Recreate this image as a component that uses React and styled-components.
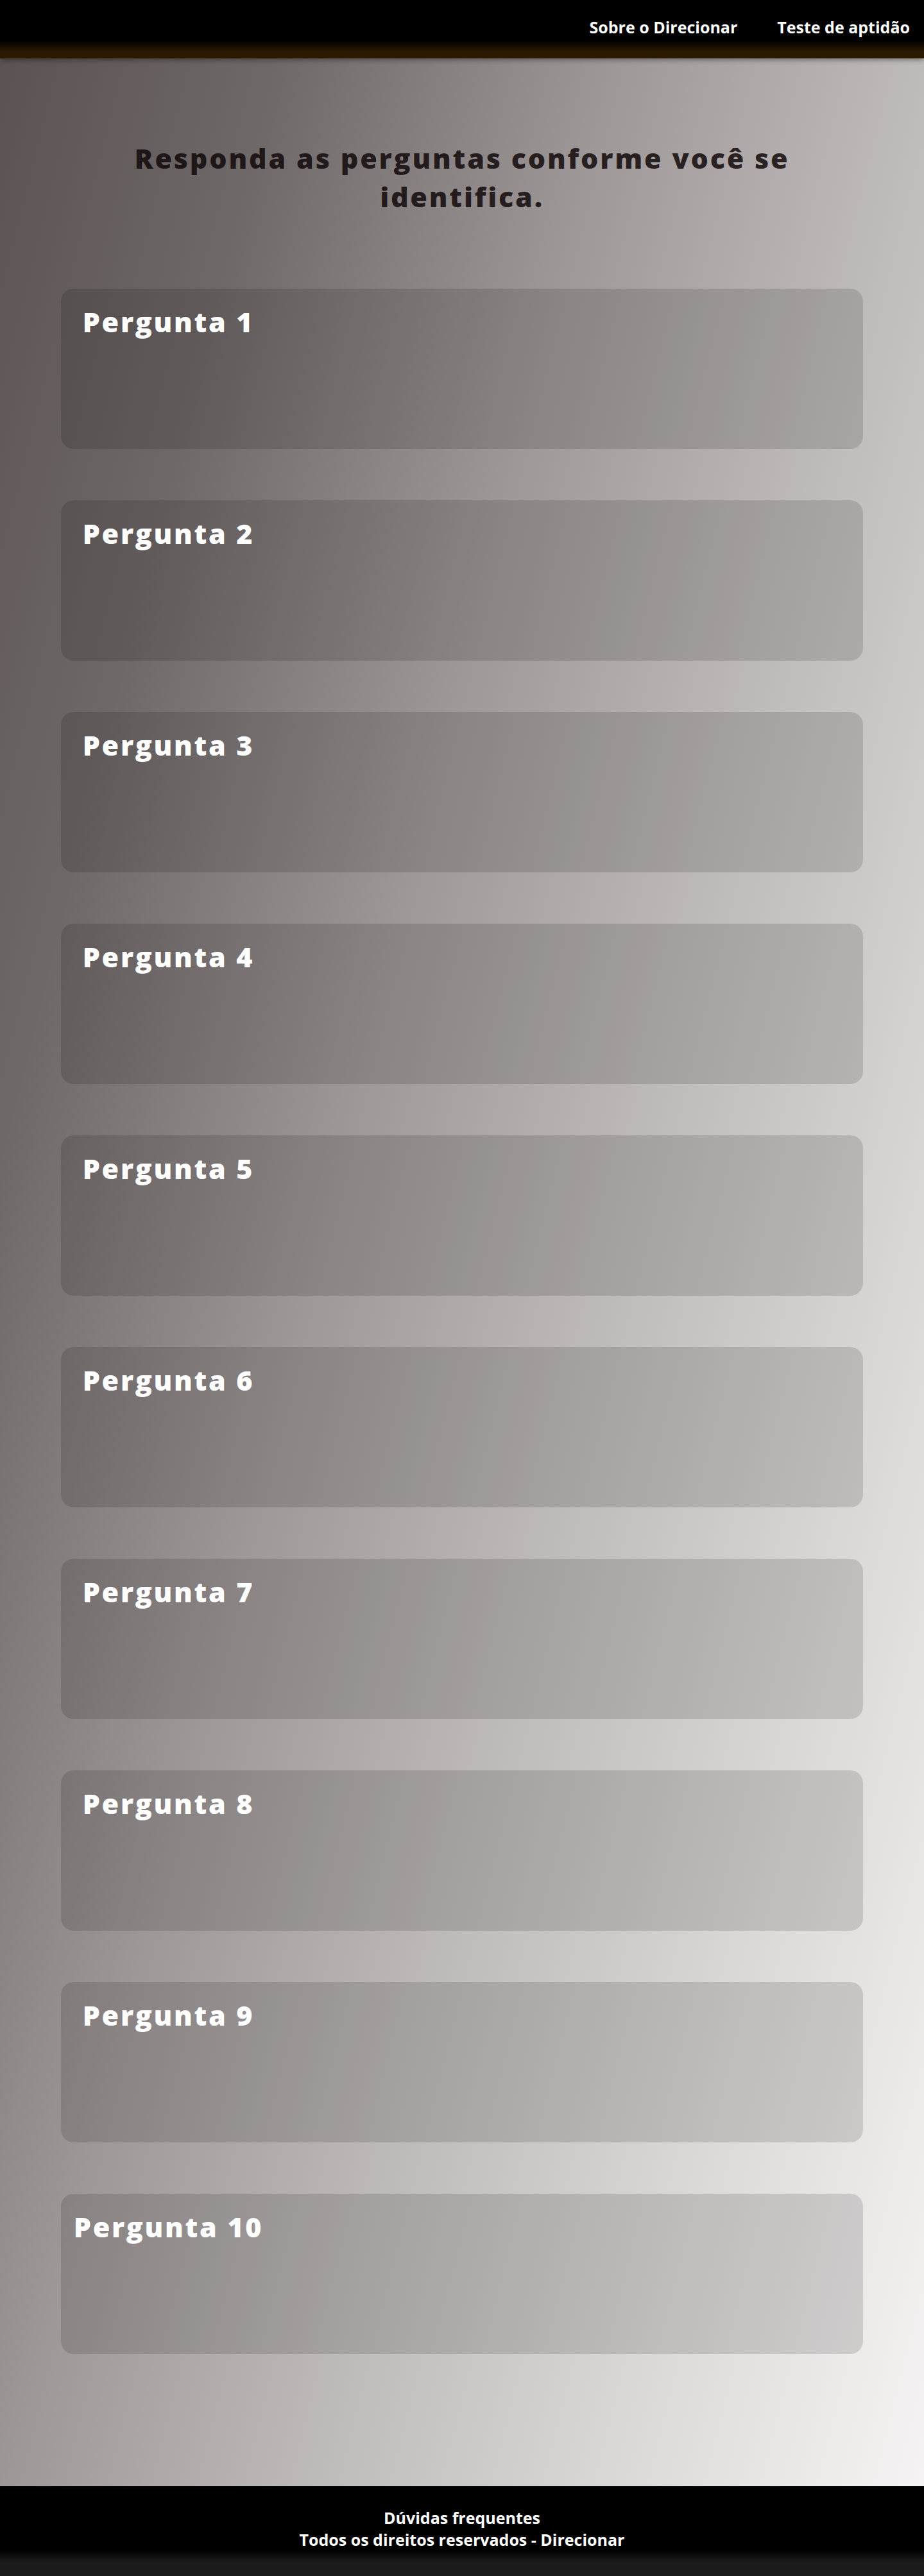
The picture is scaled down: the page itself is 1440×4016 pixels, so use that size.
import React from "react";
import styled, { createGlobalStyle } from "styled-components";

const GlobalStyle = createGlobalStyle`
  * {
    box-sizing: border-box;
  }
  body {
    margin: 0;
    font-family: "Open Sans", "Noto Sans", sans-serif;
    background: #000;
  }
`;

const Page = styled.div`
  display: flex;
  flex-direction: column;
  min-height: 4016px;
`;

const Header = styled.header`
  position: relative;
  z-index: 2;
  height: 91px;
  display: flex;
  justify-content: flex-end;
  align-items: flex-start;
  padding: 25px 22px 0 0;
  background: linear-gradient(to bottom, #000 0%, #000 70%, #291900 88%, #2a1a00 100%);
  box-shadow: 0 3px 7px rgba(0, 0, 0, 0.35);
`;

const Nav = styled.nav`
  display: flex;
  gap: 62px;
`;

const NavLink = styled.a`
  color: #fff;
  font-size: 25px;
  font-weight: 700;
  text-decoration: none;
  cursor: pointer;
`;

const Main = styled.main`
  flex: 1;
  display: flex;
  flex-direction: column;
  align-items: center;
  padding: 126px 95px 206px;
  background: linear-gradient(104deg, #5a5253 0%, #6f6868 18%, #9e9798 40%, #bfbaba 60%, #dcd8d8 80%, #f5f3f3 100%);
`;

const Title = styled.h1`
  margin: 0 0 113px;
  max-width: 1250px;
  text-align: center;
  font-size: 43px;
  line-height: 60px;
  font-weight: 800;
  letter-spacing: 2.8px;
  color: rgba(18, 10, 10, 0.85);
`;

const QuestionList = styled.section`
  width: 100%;
  max-width: 1250px;
  display: flex;
  flex-direction: column;
  gap: 80px;
`;

const QuestionCard = styled.div`
  height: 250px;
  padding-top: 22px;
  border-radius: 20px;
  background: rgba(0, 0, 0, 0.13);
`;

const QuestionTitle = styled.h2`
  margin: 0;
  width: 335px;
  text-align: center;
  font-size: 43px;
  line-height: normal;
  font-weight: 800;
  letter-spacing: 2.7px;
  color: #fff;
`;

const Footer = styled.footer`
  height: 140px;
  display: flex;
  flex-direction: column;
  align-items: center;
  padding-top: 32px;
  background: linear-gradient(to bottom, #000 0%, #000 71%, #1b1b1b 84%, #1b1b1b 100%);
`;

const FooterText = styled.p`
  margin: 0;
  color: #fff;
  font-size: 25px;
  font-weight: 700;
  line-height: normal;
`;

const questions = Array.from({ length: 10 }, (_, i) => `Pergunta ${i + 1}`);

export default function App() {
  return (
    <>
      <GlobalStyle />
      <Page>
        <Header>
          <Nav>
            <NavLink>Sobre o Direcionar</NavLink>
            <NavLink>Teste de aptidão</NavLink>
          </Nav>
        </Header>

        <Main>
          <Title>Responda as perguntas conforme você se identifica.</Title>
          <QuestionList>
            {questions.map((q) => (
              <QuestionCard key={q}>
                <QuestionTitle>{q}</QuestionTitle>
              </QuestionCard>
            ))}
          </QuestionList>
        </Main>

        <Footer>
          <FooterText>Dúvidas frequentes</FooterText>
          <FooterText>Todos os direitos reservados - Direcionar</FooterText>
        </Footer>
      </Page>
    </>
  );
}
